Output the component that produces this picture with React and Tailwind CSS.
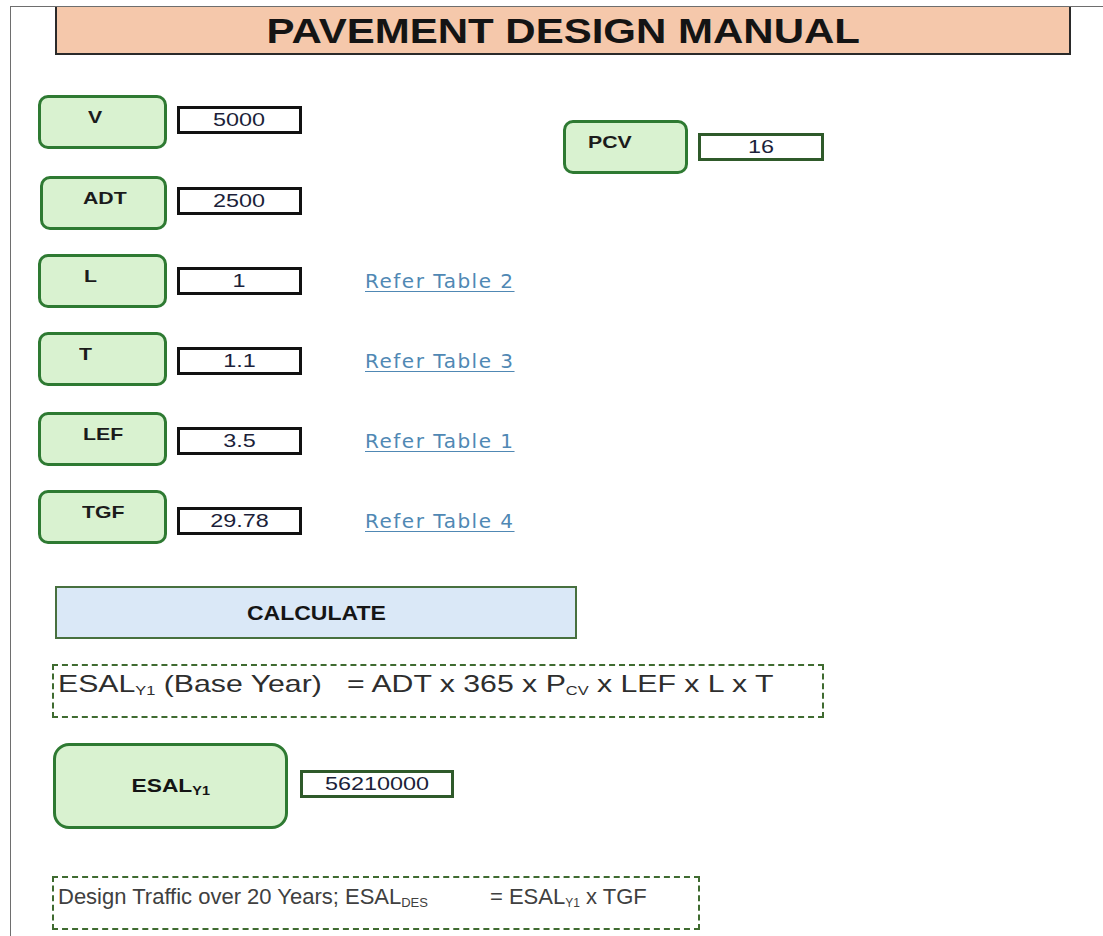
const rows = [
  { label: 'V', value: '5000', row: 'mt-0', box: 'ml-0 w-[129px]', textPad: 'pl-[47px]', valueTop: 'mt-[11px]' },
  { label: 'ADT', value: '2500', row: 'mt-[27px]', box: 'ml-[2px] w-[127px]', textPad: 'pl-[40px]', valueTop: 'mt-[11px]' },
  { label: 'L', value: '1', link: 'Refer Table 2', row: 'mt-[24px]', box: 'ml-0 w-[129px]', textPad: 'pl-[43px]', valueTop: 'mt-[13px]' },
  { label: 'T', value: '1.1', link: 'Refer Table 3', row: 'mt-[24px]', box: 'ml-0 w-[129px]', textPad: 'pl-[38px]', valueTop: 'mt-[15px]' },
  { label: 'LEF', value: '3.5', link: 'Refer Table 1', row: 'mt-[26px]', box: 'ml-0 w-[129px]', textPad: 'pl-[42px]', valueTop: 'mt-[15px]' },
  { label: 'TGF', value: '29.78', link: 'Refer Table 4', row: 'mt-[24px]', box: 'ml-0 w-[129px]', textPad: 'pl-[41px]', valueTop: 'mt-[17px]' },
];

// the sheet was captured stretched sideways, so text is widened with scale-x
function LabelBox({ children, className = '' }) {
  return (
    <div
      className={`h-[54px] shrink-0 rounded-[10px] border-[3px] border-[#2e7a32] bg-[#d9f2d0] pt-[9px] font-['Liberation_Sans',Arial,sans-serif] text-[17px] font-bold leading-[22px] text-[#1b1b1b] ${className}`}
    >
      <span className="inline-block origin-left scale-x-[1.25]">{children}</span>
    </div>
  );
}

function ValueBox({ children, className = '' }) {
  return (
    <div
      className={`flex h-[28px] shrink-0 items-center justify-center bg-white font-['Liberation_Sans',Arial,sans-serif] text-[18px] leading-none text-[#1c1f3a] ${className}`}
    >
      <span className="inline-block scale-x-[1.3]">{children}</span>
    </div>
  );
}

export default function App() {
  return (
    <div className="min-h-screen bg-white pl-[10px] pt-[6px]">
      <div className="min-h-[930px] border-l border-t border-[#6e6e6e]">
        {/* Title bar */}
        <div className="ml-[44px] flex h-[48px] w-[1016px] items-center justify-center border-x-2 border-b-2 border-[#2a2a2a] bg-[#f5c8ab]">
          <h1 className="inline-block scale-x-[1.2] font-['Liberation_Sans',Arial,sans-serif] text-[35px] font-bold leading-none text-[#141414]">
            PAVEMENT DESIGN MANUAL
          </h1>
        </div>

        <div className="pl-[27px]">
          {/* Inputs */}
          <div className="mt-[40px] flex">
            <div className="w-[525px] shrink-0">
              {rows.map((r) => (
                <div key={r.label} className={`flex items-start ${r.row}`}>
                  <LabelBox className={`${r.box} ${r.textPad}`}>{r.label}</LabelBox>
                  <div className={`ml-[10px] flex items-center ${r.valueTop}`}>
                    <ValueBox className="w-[125px] border-[3px] border-[#111]">{r.value}</ValueBox>
                    {r.link && (
                      <a
                        href="#"
                        className="ml-[63px] font-['DejaVu_Sans',sans-serif] text-[20px] leading-none tracking-[1.5px] text-[#5088b4] underline decoration-1 underline-offset-[3px]"
                      >
                        {r.link}
                      </a>
                    )}
                  </div>
                </div>
              ))}
            </div>

            <div className="mt-[25px] flex items-start">
              <LabelBox className="w-[125px] pl-[22px]">PCV</LabelBox>
              <ValueBox className="ml-[10px] mt-[13px] w-[126px] border-[3px] border-[#2f5a2a]">16</ValueBox>
            </div>
          </div>

          {/* Calculate */}
          <button
            type="button"
            className="ml-[17px] mt-[42px] flex h-[53px] w-[522px] items-center justify-center border-2 border-[#47703f] bg-[#dae8f7] font-['Liberation_Sans',Arial,sans-serif] text-[20px] font-bold text-[#151515]"
          >
            <span className="inline-block scale-x-[1.15]">CALCULATE</span>
          </button>

          {/* Base year formula */}
          <div className="ml-[14px] mt-[25px] h-[54px] w-[772px] border-2 border-dashed border-[#3f6b30] pl-[4px] pt-[3px] font-['Liberation_Sans',Arial,sans-serif] text-[24px] leading-[30px] text-[#2e2e2e]">
            <span className="inline-block origin-left scale-x-[1.26] whitespace-nowrap">
              ESAL<sub className="text-[13px]">Y1</sub> (Base Year)&nbsp;&nbsp;&nbsp;= ADT x 365 x P<sub className="text-[13px]">CV</sub> x LEF x L x T
            </span>
          </div>

          {/* ESAL Y1 result */}
          <div className="ml-[15px] mt-[25px] flex items-start">
            <div className="flex h-[86px] w-[235px] items-center justify-center rounded-[16px] border-[3px] border-[#2e7a32] bg-[#d9f2d0] font-['Liberation_Sans',Arial,sans-serif] text-[19px] font-bold text-[#141414]">
              <span className="inline-block scale-x-[1.2]">
                ESAL<sub className="text-[12px]">Y1</sub>
              </span>
            </div>
            <ValueBox className="ml-[12px] mt-[27px] w-[154px] border-[3px] border-[#2f5a2a]">56210000</ValueBox>
          </div>

          {/* Design traffic */}
          <div className="ml-[14px] mt-[47px] flex h-[54px] w-[648px] items-start border-2 border-dashed border-[#3f6b30] pl-[4px] pt-[5px] font-['Liberation_Sans',Arial,sans-serif] text-[22px] leading-[28px] text-[#404040]">
            <span>
              Design Traffic over 20 Years; ESAL<sub className="text-[13px]">DES</sub>
            </span>
            <span className="ml-[62px]">
              = ESAL<sub className="text-[12px]">Y1</sub> x TGF
            </span>
          </div>
        </div>
      </div>
    </div>
  );
}
